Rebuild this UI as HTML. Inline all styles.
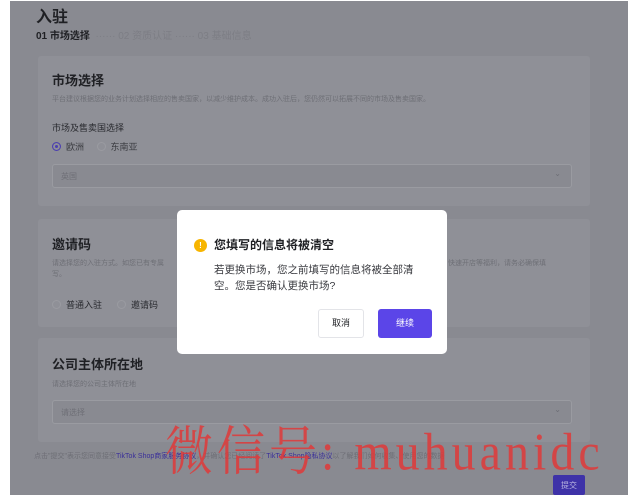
<!DOCTYPE html>
<html><head><meta charset="utf-8"><style>
*{margin:0;padding:0;box-sizing:border-box}
body{width:638px;height:495px;overflow:hidden;background:#fff;font-family:"Liberation Sans","Noto Sans CJK SC",sans-serif;position:relative}
.bg{position:absolute;left:10px;top:1px;width:618px;height:494px;background:#898a91}
.abs{position:absolute;white-space:nowrap}
.card{position:absolute;left:38px;width:552px;background:#8f9097;border-radius:3px}
.t{color:#1f2024;font-weight:bold;font-size:13px}
.s{color:#6e6f76;font-size:7px}
.inp{position:absolute;left:14px;width:520px;height:24px;border:1px solid #9a9ba1;background:#898a91;border-radius:3px;color:#6e6f76;font-size:8px;padding:6px 8px}
.inp:after{content:"⌄";position:absolute;right:10px;top:4px;color:#6e6f76}
.r{display:inline-block;width:9px;height:9px;border:1px solid #9a9ba1;border-radius:50%;vertical-align:-1px;margin-right:5px}
</style></head><body>
<div class="bg"></div>
<div class="abs" style="left:36px;top:3px;font-size:16px;font-weight:bold;color:#1f2024">入驻</div>
<div class="abs" style="left:36px;top:27px;font-size:10px;font-weight:bold;color:#1f2024">01 市场选择 <span style="color:#7d7e85;font-weight:normal">&nbsp;······ 02 资质认证 ······ 03 基础信息</span></div>

<div class="card" style="top:56px;height:150px">
 <div class="abs t" style="left:14px;top:14px">市场选择</div>
 <div class="abs s" style="left:14px;top:38px">平台建议根据您的业务计划选择相应的售卖国家，以减少维护成本。成功入驻后，您仍然可以拓展不同的市场及售卖国家。</div>
 <div class="abs" style="left:14px;top:65px;font-size:9px;color:#2a2b30">市场及售卖国选择</div>
 <div class="abs" style="left:14px;top:84px;font-size:9px;color:#3a3b40"><span class="r" style="border-color:#4b3fb0;box-shadow:inset 0 0 0 2px #8f9097;background:#4b3fb0"></span>欧洲 &nbsp;&nbsp;&nbsp;&nbsp;<span class="r"></span>东南亚</div>
 <div class="inp" style="top:108px">英国</div>
</div>

<div class="card" style="top:219px;height:108px">
 <div class="abs t" style="left:14px;top:15px">邀请码</div>
 <div class="abs s" style="left:14px;top:39px">请选择您的入驻方式。如您已有专属</div>
 <div class="abs s" style="left:410px;top:39px">快速开店等福利，请务必确保填</div>
 <div class="abs s" style="left:14px;top:50px">写。</div>
 <div class="abs" style="left:14px;top:79px;font-size:9px;color:#2a2b30"><span class="r"></span>普通入驻 &nbsp;&nbsp;&nbsp;&nbsp;&nbsp;<span class="r"></span>邀请码</div>
</div>

<div class="card" style="top:338px;height:104px">
 <div class="abs t" style="left:14px;top:16px">公司主体所在地</div>
 <div class="abs s" style="left:14px;top:41px">请选择您的公司主体所在地</div>
 <div class="inp" style="top:62px">请选择</div>
</div>

<div class="abs" style="left:34px;top:451px;font-size:7px;color:#6e6f76">点击"提交"表示您同意接受<span style="color:#3a2f99">TikTok Shop商家服务协议</span>，并确认您已经阅读了<span style="color:#3a2f99">TikTok Shop隐私协议</span>以了解我们如何收集、使用您的数据</div>
<div class="abs" style="left:553px;top:475px;width:32px;height:20px;background:#3e32a8;color:#b8b4e0;font-size:8px;text-align:center;padding-top:5px;border-radius:2px">提交</div>

<div class="abs" style="left:177px;top:210px;width:270px;height:144px;background:#fff;border-radius:5px"></div>
<div class="abs" style="left:194px;top:239px;width:13px;height:13px;border-radius:50%;background:#f7b500;color:#fff;font-size:8px;font-weight:bold;text-align:center;line-height:13px">!</div>
<div class="abs" style="left:214px;top:236px;font-size:12px;font-weight:bold;color:#1f2024">您填写的信息将被清空</div>
<div class="abs" style="left:214px;top:262px;font-size:10.5px;color:#3a3b40;line-height:16px">若更换市场，您之前填写的信息将被全部清<br>空。您是否确认更换市场?</div>
<div class="abs" style="left:318px;top:309px;width:46px;height:29px;border:1px solid #e3e4e8;border-radius:3px;font-size:9px;color:#1f2024;text-align:center;line-height:27px">取消</div>
<div class="abs" style="left:378px;top:309px;width:54px;height:29px;background:#5b45e8;border-radius:3px;font-size:9px;color:#fff;text-align:center;line-height:29px">继续</div>

<div class="abs" style="left:165px;top:420px;font-size:48px;line-height:60px;color:#e03a3a;font-family:'Liberation Serif','Noto Serif CJK SC',serif;opacity:.85;letter-spacing:4px;transform:scaleY(1.1);transform-origin:top left">微信号: muhuanidc</div>
</body></html>
